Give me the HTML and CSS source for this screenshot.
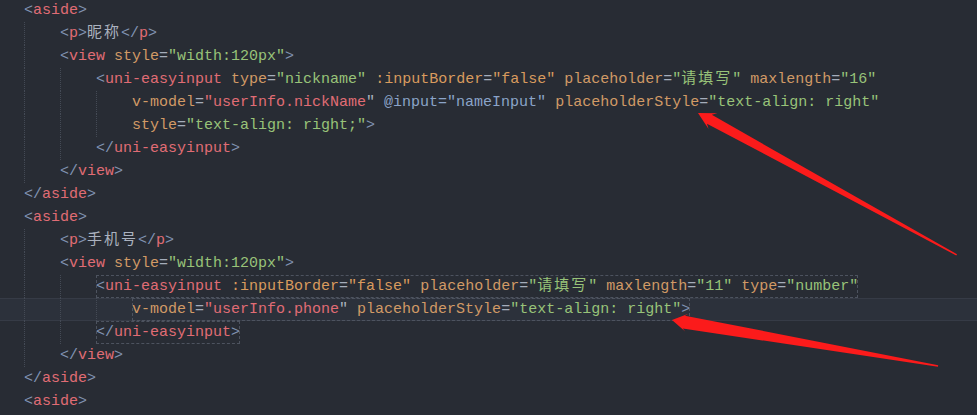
FILE: index.html
```html
<!DOCTYPE html>
<html lang="zh">
<head>
  <meta charset="UTF-8" />
  <title>editor</title>
  <link rel="stylesheet" href="styles.css">
</head>
<body>
<div class="editor">
  <div class="code">
    <div class="ln"><span class="b">&lt;</span><span class="t">aside</span><span class="b">&gt;</span></div>
    <div class="ln"><i class="g"></i><span class="b">&lt;</span><span class="t">p</span><span class="b">&gt;</span><span class="x cjk">昵称</span><span class="b">&lt;/</span><span class="t">p</span><span class="b">&gt;</span></div>
    <div class="ln"><i class="g"></i><span class="b">&lt;</span><span class="t">view</span> <span class="a">style</span><span class="e">=</span><span class="s">"width:120px"</span><span class="b">&gt;</span></div>
    <div class="ln"><i class="g"></i><i class="g"></i><span class="b">&lt;</span><span class="t">uni-easyinput</span> <span class="a">type</span><span class="e">=</span><span class="s">"nickname"</span> <span class="o">:inputBorder</span><span class="e">=</span><span class="o">"false"</span> <span class="a">placeholder</span><span class="e">=</span><span class="s">"<span class="cjk">请填写</span>"</span> <span class="a">maxlength</span><span class="e">=</span><span class="s">"16"</span></div>
    <div class="ln"><i class="g"></i><i class="g"></i><i class="g"></i><span class="a">v-model</span><span class="e">=</span><span class="r">"userInfo.nickName</span><span class="x">"</span> <span class="v">@input="nameInput"</span> <span class="a">placeholderStyle</span><span class="e">=</span><span class="s">"text-align: right"</span></div>
    <div class="ln"><i class="g"></i><i class="g"></i><i class="g"></i><span class="a">style</span><span class="e">=</span><span class="s">"text-align: right;"</span><span class="b">&gt;</span></div>
    <div class="ln"><i class="g"></i><i class="g"></i><span class="b">&lt;/</span><span class="t">uni-easyinput</span><span class="b">&gt;</span></div>
    <div class="ln"><i class="g"></i><span class="b">&lt;/</span><span class="t">view</span><span class="b">&gt;</span></div>
    <div class="ln"><span class="b">&lt;/</span><span class="t">aside</span><span class="b">&gt;</span></div>
    <div class="ln"><span class="b">&lt;</span><span class="t">aside</span><span class="b">&gt;</span></div>
    <div class="ln"><i class="g"></i><span class="b">&lt;</span><span class="t">p</span><span class="b">&gt;</span><span class="x cjk">手机号</span><span class="b">&lt;/</span><span class="t">p</span><span class="b">&gt;</span></div>
    <div class="ln"><i class="g"></i><span class="b">&lt;</span><span class="t">view</span> <span class="a">style</span><span class="e">=</span><span class="s">"width:120px"</span><span class="b">&gt;</span></div>
    <div class="ln"><i class="g"></i><i class="g"></i><span class="box"><span class="b">&lt;</span><span class="t">uni-easyinput</span> <span class="o">:inputBorder</span><span class="e">=</span><span class="o">"false"</span> <span class="a">placeholder</span><span class="e">=</span><span class="s">"<span class="cjk">请填写</span>"</span> <span class="a">maxlength</span><span class="e">=</span><span class="s">"11"</span> <span class="a">type</span><span class="e">=</span><span class="s">"number"</span></span></div>
    <div class="ln current"><i class="g"></i><i class="g"></i><i class="g"></i><span class="box"><span class="a">v-model</span><span class="e">=</span><span class="r">"userInfo.phone</span><span class="x">"</span> <span class="a">placeholderStyle</span><span class="e">=</span><span class="s">"text-align: right"</span><span class="b">&gt;</span></span></div>
    <div class="ln"><i class="g"></i><i class="g"></i><span class="box"><span class="b">&lt;/</span><span class="t">uni-easyinput</span><span class="b">&gt;</span></span></div>
    <div class="ln"><i class="g"></i><span class="b">&lt;/</span><span class="t">view</span><span class="b">&gt;</span></div>
    <div class="ln"><span class="b">&lt;/</span><span class="t">aside</span><span class="b">&gt;</span></div>
    <div class="ln"><span class="b">&lt;</span><span class="t">aside</span><span class="b">&gt;</span></div>
  </div>

  <svg class="marks" width="977" height="415" viewBox="0 0 977 415">
    <polygon class="arrow" transform="translate(698 113) rotate(28.74)" points="0,0 17,-9 13,-5 295,-0.8 295,0.8 13,5 17,9" />
    <polygon class="arrow" transform="translate(672 320) rotate(9.81)" points="0,0 15,-9 12,-6.5 270,-0.8 270,0.8 12,6.5 15,9" />
  </svg>
</div>
</body>
</html>
```

FILE: styles.css
```css
* { box-sizing: border-box; margin: 0; padding: 0; }

html, body {
  background: #282c34;
  overflow: hidden;
}

.editor {
  position: relative;
  width: 977px;
  height: 415px;
  overflow: hidden;
}

.code {
  margin-top: -1px;
  font-family: "Liberation Mono", "Noto Sans CJK SC", monospace;
  font-size: 15px;
  line-height: 23px;
  color: #abb2bf;
}

.ln {
  height: 23px;
  padding-left: 24px;
  white-space: pre;
}

.ln.current {
  background: #2c313b;
  box-shadow: inset 0 1px 0 #363b46, inset 0 -1px 0 #363b46;
}

/* indent guides */
.g {
  display: inline-block;
  width: 36px;
  height: 23px;
  vertical-align: top;
  border-left: 1px dotted #444a55;
}

/* matched tag box */
.box {
  display: inline-block;
  height: 23px;
  vertical-align: top;
  outline: 1px dashed #4d535f;
  outline-offset: -1px;
}

.cjk {
  font-family: "Noto Sans CJK SC", sans-serif;
  letter-spacing: 2px;
  line-height: 1;
}

.t { color: #e06c75; }
.b { color: #8193b2; }
.a { color: #d19a66; }
.o { color: #d99b5e; }
.e { color: #a5adbb; }
.s { color: #98c379; }
.r { color: #e06c75; }
.v { color: #8ba4c9; }
.x { color: #abb2bf; }

.marks {
  position: absolute;
  left: 0;
  top: 0;
  pointer-events: none;
}

.arrow {
  fill: #fb1b1b;
}
```
